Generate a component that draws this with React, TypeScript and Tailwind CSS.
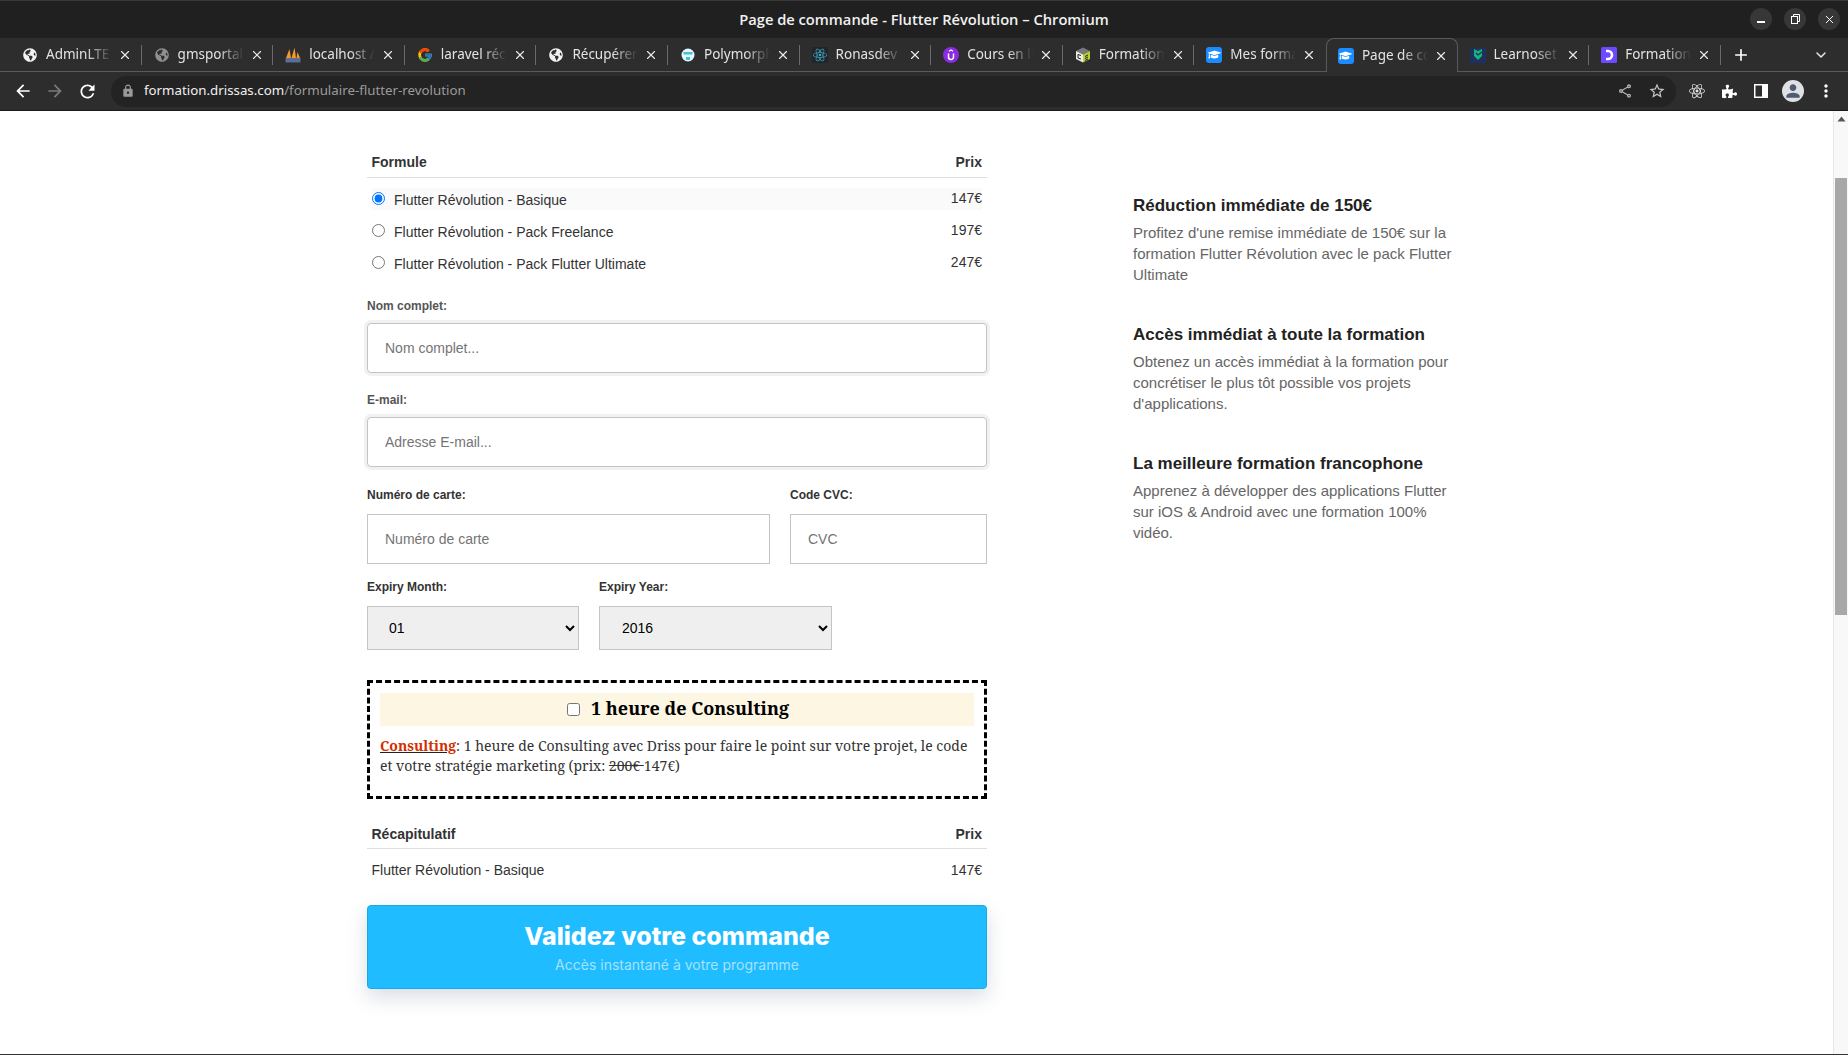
import React from 'react';
import { X, Plus, ChevronDown } from 'lucide-react';
import { FaGlobeAmericas, FaGraduationCap, FaPuzzlePiece } from 'react-icons/fa';
import { FcGoogle } from 'react-icons/fc';
import { SiReact } from 'react-icons/si';
import { MdArrowBack, MdArrowForward, MdRefresh, MdLock, MdOutlineShare, MdStarBorder, MdMoreVert, MdPerson } from 'react-icons/md';

const Globe = ({ dim }: { dim?: boolean }) => (
  <FaGlobeAmericas size={14} className={dim ? 'text-[#8f8f8f]' : 'text-[#f2f2f2]'} />
);

const Pma = () => (
  <svg width="16" height="16" viewBox="0 0 16 16">
    <path d="M1 11 L4.5 2 L6 11Z M6.5 11 L9.5 0.5 L11 11Z M11.5 11 L12.5 5 L15 11Z" fill="#f29a2e" />
    <rect x="0.5" y="11" width="15" height="4.5" fill="#5a6f96" />
  </svg>
);

const Polymorph = () => (
  <svg width="16" height="16" viewBox="0 0 16 16">
    <circle cx="8" cy="8" r="6.5" fill="#e4f9fc" />
    <path d="M3.5 5h9v2.5h-9z" fill="#45c0d8" />
    <path d="M6 10h4v3H6z" fill="#45c0d8" />
  </svg>
);

const Ronas = () => (
  <span className="w-4 h-4 bg-[#20272c] flex items-center justify-center">
    <SiReact size={14} className="text-[#3fa7c4]" />
  </span>
);

const Udemy = () => (
  <svg width="16" height="16" viewBox="0 0 16 16">
    <circle cx="8" cy="8" r="8" fill="#8a2be2" />
    <path d="M5.5 6.5v3.5a2.5 2.5 0 0 0 5 0V6.5" fill="none" stroke="#fff" strokeWidth="1.5" />
    <path d="M6 4.2 L8 3 L10 4.2" fill="none" stroke="#fff" strokeWidth="1.2" />
  </svg>
);

const Cube = () => (
  <svg width="16" height="16" viewBox="0 0 16 16">
    <path d="M8 0.5 L15 4 L8 7.5 L1 4Z" fill="#77787a" />
    <path d="M1 4 L8 7.5 V15.5 L1 12Z" fill="#eeeeee" />
    <path d="M15 4 L8 7.5 V15.5 L15 12Z" fill="#b7cf34" />
    <path d="M6 8.5 L3 7.5 V11 L6 12 M10 9.5 L13 8 M10 11.5 L13 10 M10 13.5 L13 12" fill="none" stroke="#222" strokeWidth="1" />
  </svg>
);

const Grad = () => (
  <span className="w-4 h-4 rounded-[3px] bg-[#1a8cff] flex items-center justify-center">
    <FaGraduationCap size={13} className="text-white" />
  </span>
);

const Learnoset = () => (
  <svg width="16" height="16" viewBox="0 0 16 16">
    <rect y="1" width="16" height="15" fill="#1c3160" />
    <path d="M4 2 L8 4 L12 2 L12 9 L8 13 L4 9Z" fill="#18b27a" />
    <path d="M6 6 L8 8 L12 5" fill="none" stroke="#1c3160" strokeWidth="1.3" />
  </svg>
);

const Drip = () => (
  <svg width="16" height="16" viewBox="0 0 16 16">
    <rect width="16" height="16" rx="1.5" fill="#6d4aff" />
    <path d="M5 4 H7 A4 4 0 0 1 7 12 H5" fill="none" stroke="#fff" strokeWidth="2.6" />
  </svg>
);

const tabs: { title: string; icon: React.ReactNode; active?: boolean }[] = [
  { title: 'AdminLTE 3 | Dashboard', icon: <Globe /> },
  { title: 'gmsportal', icon: <Globe dim /> },
  { title: 'localhost / 127', icon: <Pma /> },
  { title: 'laravel récupérer', icon: <FcGoogle size={16} /> },
  { title: 'Récupérer les', icon: <Globe /> },
  { title: 'Polymorphic', icon: <Polymorph /> },
  { title: 'Ronasdev - Accueil', icon: <Ronas /> },
  { title: 'Cours en ligne', icon: <Udemy /> },
  { title: 'Formations', icon: <Cube /> },
  { title: 'Mes formations', icon: <Grad /> },
  { title: 'Page de commande', icon: <Grad />, active: true },
  { title: 'Learnoset - Tous', icon: <Learnoset /> },
  { title: 'Formations', icon: <Drip /> },
];

function TitleBar() {
  return (
    <div className="h-[38px] bg-[#202020] border-t border-[#383838] relative flex items-center justify-center">
      <span className="font-['Open_Sans',sans-serif] font-semibold text-[14.7px] text-[#f1f1f1]">
        Page de commande - Flutter Révolution – Chromium
      </span>
      <div className="absolute right-[8px] top-[7px] flex gap-[12px]">
        <span className="w-[22px] h-[22px] rounded-full bg-[#373737] flex items-center justify-center">
          <span className="w-[8px] h-[1.5px] bg-white mt-[6px]" />
        </span>
        <span className="w-[22px] h-[22px] rounded-full bg-[#373737] flex items-center justify-center">
          <svg width="10" height="10" viewBox="0 0 10 10" fill="none" stroke="#fff" strokeWidth="1">
            <rect x="1.5" y="2.5" width="6" height="7" />
            <path d="M3.5 2.5V0.5H9.5V7.5H7.5" />
          </svg>
        </span>
        <span className="w-[22px] h-[22px] rounded-full bg-[#373737] flex items-center justify-center">
          <X size={13} className="text-white" strokeWidth={1.8} />
        </span>
      </div>
    </div>
  );
}

function TabStrip() {
  return (
    <div className="h-[34px] bg-[#2d2d2d] border-b border-[#5a5a5a] flex items-end pl-[10px] font-['Noto_Sans',sans-serif] text-[13.5px]">
      {tabs.map((t, i) => {
        const hideSep = t.active || tabs[i + 1]?.active;
        return (
          <div
            key={i}
            className={
              t.active
                ? 'relative w-[131.6px] h-[34px] -mb-px flex items-center pl-[11px] pr-[8px] bg-[#2d2d2d] border border-b-0 border-[#5a5a5a] rounded-t-[8px]'
                : 'relative w-[131.6px] h-[33px] flex items-center pl-[12px] pr-[8px]'
            }
          >
            <span className="w-4 h-4 flex items-center justify-center shrink-0">{t.icon}</span>
            <span className="ml-[8px] w-[66px] overflow-hidden whitespace-nowrap text-[#e3e3e3] [mask-image:linear-gradient(to_right,black_62%,transparent_100%)]">
              {t.title}
            </span>
            <X size={14} strokeWidth={2} className="ml-[6px] text-[#e8e8e8] shrink-0" />
            {!hideSep && <span className="absolute right-0 top-[7px] h-[20px] w-px bg-[#6a6a6a]" />}
          </div>
        );
      })}
      <div className="h-[33px] flex items-center ml-[11px]">
        <Plus size={18} strokeWidth={2.2} className="text-white" />
      </div>
      <div className="h-[33px] flex items-center ml-[63px]">
        <ChevronDown size={16} strokeWidth={2.2} className="text-[#e8e8e8]" />
      </div>
    </div>
  );
}

function Toolbar() {
  return (
    <div className="h-[39px] bg-[#2d2d2d] border-b border-[#1a1a1a] flex items-center pl-[13px]">
      <MdArrowBack size={20} className="text-white" />
      <MdArrowForward size={20} className="text-[#7b7b7b] ml-[12px]" />
      <MdRefresh size={21} className="text-white ml-[12px]" />
      <div className="ml-[13px] w-[1565px] h-[31px] bg-[#232323] rounded-full flex items-center pl-[10px] pr-[10px] font-['Noto_Sans',sans-serif] text-[13.3px]">
        <MdLock size={14} className="text-[#9a9a9a]" />
        <span className="ml-[9px] text-[#f1f1f1]">formation.drissas.com</span>
        <span className="text-[#9b9b9b]">/formulaire-flutter-revolution</span>
        <MdOutlineShare size={16} className="text-[#b5b5b5] ml-auto" />
        <MdStarBorder size={18} className="text-[#c8c8c8] ml-[15px]" />
      </div>
      <span className="ml-[13px] w-4 h-4 flex items-center justify-center">
        <SiReact size={16} className="text-[#e4e4e4]" />
      </span>
      <FaPuzzlePiece size={15} className="text-white ml-[17px]" />
      <svg width="14" height="14" viewBox="0 0 14 14" className="ml-[17px]">
        <rect width="14" height="14" fill="#fff" />
        <rect x="1.5" y="1.5" width="6.5" height="11" fill="#2d2d2d" />
      </svg>
      <span className="ml-[14px] w-[22px] h-[22px] rounded-full bg-[#dfe1e5] flex items-center justify-center overflow-hidden">
        <MdPerson size={20} className="text-[#4f5b70]" />
      </span>
      <MdMoreVert size={20} className="text-white ml-[12px]" />
    </div>
  );
}

const FieldLabel = ({ children, className }: { children: React.ReactNode; className: string }) => (
  <label className={'block text-[12px] leading-[14px] font-bold ' + className}>{children}</label>
);

const boxInput =
  'w-full px-[17px] text-[14px] text-[#333] bg-white border border-[#c4c4c4] outline-none placeholder:text-[#757575] ';

const plans = [
  { name: 'Flutter Révolution - Basique', price: '147€' },
  { name: 'Flutter Révolution - Pack Freelance', price: '197€' },
  { name: 'Flutter Révolution - Pack Flutter Ultimate', price: '247€' },
];

function OrderForm() {
  return (
    <form className="w-[620px] shrink-0 text-[#333] font-['Liberation_Sans',Arial,sans-serif]">
      <div className="h-[32px] pl-[4.5px] pr-[5px] pt-[8px] border-b border-[#dedede] flex justify-between text-[14px] leading-[16px] font-bold">
        <span>Formule</span>
        <span>Prix</span>
      </div>
      {plans.map((p, i) => (
        <div key={p.name} className={'mx-[5px] h-[22px] mt-[10px] flex items-start justify-between text-[14px] ' + (i === 0 ? 'bg-[#fafafa]' : '')}>
          <label className="flex items-center h-[22px] pt-[2px]">
            <input type="radio" name="plan" defaultChecked={i === 0} className="w-[13px] h-[13px] -mt-[4px] mr-[9px]" />
            <span>{p.name}</span>
          </label>
          <span className="leading-[20px]">{p.price}</span>
        </div>
      ))}

      <FieldLabel className="mt-[25px] text-[#555]">Nom complet:</FieldLabel>
      <input placeholder="Nom complet..." className={boxInput + 'mt-[10px] h-[50px] rounded-[4px] shadow-[0_0_0_3px_#f1f1f1]'} />

      <FieldLabel className="mt-[20px] text-[#555]">E-mail:</FieldLabel>
      <input placeholder="Adresse E-mail..." className={boxInput + 'mt-[10px] h-[50px] rounded-[4px] shadow-[0_0_0_3px_#f1f1f1]'} />

      <div className="flex gap-[20px] mt-[21px]">
        <div className="w-[403px]">
          <FieldLabel className="text-[#333]">Numéro de carte:</FieldLabel>
          <input placeholder="Numéro de carte" className={boxInput + 'mt-[12px] h-[50px]'} />
        </div>
        <div className="flex-1">
          <FieldLabel className="text-[#333]">Code CVC:</FieldLabel>
          <input placeholder="CVC" className={boxInput + 'mt-[12px] h-[50px]'} />
        </div>
      </div>

      <div className="flex gap-[20px] mt-[16px]">
        <div className="w-[212px]">
          <FieldLabel className="text-[#333]">Expiry Month:</FieldLabel>
          <select defaultValue="01" className="mt-[12px] w-full h-[44px] pl-[17px] text-[14px] text-black bg-[#efefef] border border-[#c4c4c4]">
            <option>01</option>
            <option>02</option>
          </select>
        </div>
        <div className="w-[233px]">
          <FieldLabel className="text-[#333]">Expiry Year:</FieldLabel>
          <select defaultValue="2016" className="mt-[12px] w-full h-[44px] pl-[18px] text-[14px] text-black bg-[#efefef] border border-[#c4c4c4]">
            <option>2016</option>
            <option>2017</option>
          </select>
        </div>
      </div>

      <div className="mt-[30px] h-[119px] border-[3px] border-dashed border-black px-[10px] pt-[10px] font-['Noto_Serif','DejaVu_Serif',serif] text-[#333]">
        <div className="h-[33px] bg-[#fdf6e3] pb-[2px] pl-[2px] flex items-center justify-center text-[18px] font-bold text-black">
          <input type="checkbox" className="w-[13px] h-[13px] mr-[11px] mt-[2px]" />
          1 heure de Consulting
        </div>
        <p className="mt-[10px] text-[14px] leading-[20px]">
          <span className="font-bold underline text-[#d32f00] decoration-[#222]">Consulting</span>: 1 heure de Consulting avec Driss pour faire le point sur votre projet, le code et votre stratégie marketing (prix: <s>200€ </s>147€)
        </p>
      </div>

      <div className="h-[32px] mt-[18px] pl-[4.5px] pr-[5px] pt-[9px] border-b border-[#dedede] flex justify-between text-[14px] leading-[16px] font-bold">
        <span>Récapitulatif</span>
        <span>Prix</span>
      </div>
      <div className="pl-[4.5px] pr-[5px] pt-[12px] h-[56px] flex justify-between text-[14px] leading-[18px]">
        <span>Flutter Révolution - Basique</span>
        <span>147€</span>
      </div>

      <button type="button" className="w-full h-[84px] rounded-[4px] bg-[#1fbcff] border border-[#1aa9e8] shadow-[0_8px_20px_rgba(60,80,120,0.2)] flex flex-col items-center font-['Inter',sans-serif]">
        <span className="mt-[14px] text-[25px] leading-[32px] font-extrabold text-white">Validez votre commande</span>
        <span className="mt-[4px] text-[14px] leading-[18px] text-white/60">Accès instantané à votre programme</span>
      </button>
    </form>
  );
}

const benefits = [
  {
    title: 'Réduction immédiate de 150€',
    text: "Profitez d'une remise immédiate de 150€ sur la formation Flutter Révolution avec le pack Flutter Ultimate",
  },
  {
    title: 'Accès immédiat à toute la formation',
    text: "Obtenez un accès immédiat à la formation pour concrétiser le plus tôt possible vos projets d'applications.",
  },
  {
    title: 'La meilleure formation francophone',
    text: 'Apprenez à développer des applications Flutter sur iOS & Android avec une formation 100% vidéo.',
  },
];

function Benefits() {
  return (
    <aside className="ml-[146px] w-[330px] pt-[49px] flex flex-col gap-[39px] font-['Liberation_Sans',Arial,sans-serif]">
      {benefits.map((b) => (
        <div key={b.title}>
          <h3 className="text-[17px] leading-[22px] font-bold text-[#222]">{b.title}</h3>
          <p className="mt-[5px] text-[15px] leading-[21px] text-[#666]">{b.text}</p>
        </div>
      ))}
    </aside>
  );
}

function Scrollbar() {
  return (
    <div className="w-[15px] shrink-0 bg-[#f8f8f8] border-l border-[#e6e6e6] flex flex-col items-center">
      <svg width="9" height="6" viewBox="0 0 9 6" className="mt-[5px]">
        <path d="M4.5 0.5 L8.5 5.5 H0.5Z" fill="#555" />
      </svg>
      <div className="mt-[56px] w-[12px] h-[437px] bg-[#a8a8a8]" />
    </div>
  );
}

export default function App() {
  return (
    <div className="h-[1055px] w-[1848px] flex flex-col overflow-hidden bg-white">
      <TitleBar />
      <TabStrip />
      <Toolbar />
      <div className="flex-1 flex border-b border-[#333] min-h-0">
        <main className="flex-1 flex pl-[367px] pt-[35px] bg-white">
          <OrderForm />
          <Benefits />
        </main>
        <Scrollbar />
      </div>
    </div>
  );
}
